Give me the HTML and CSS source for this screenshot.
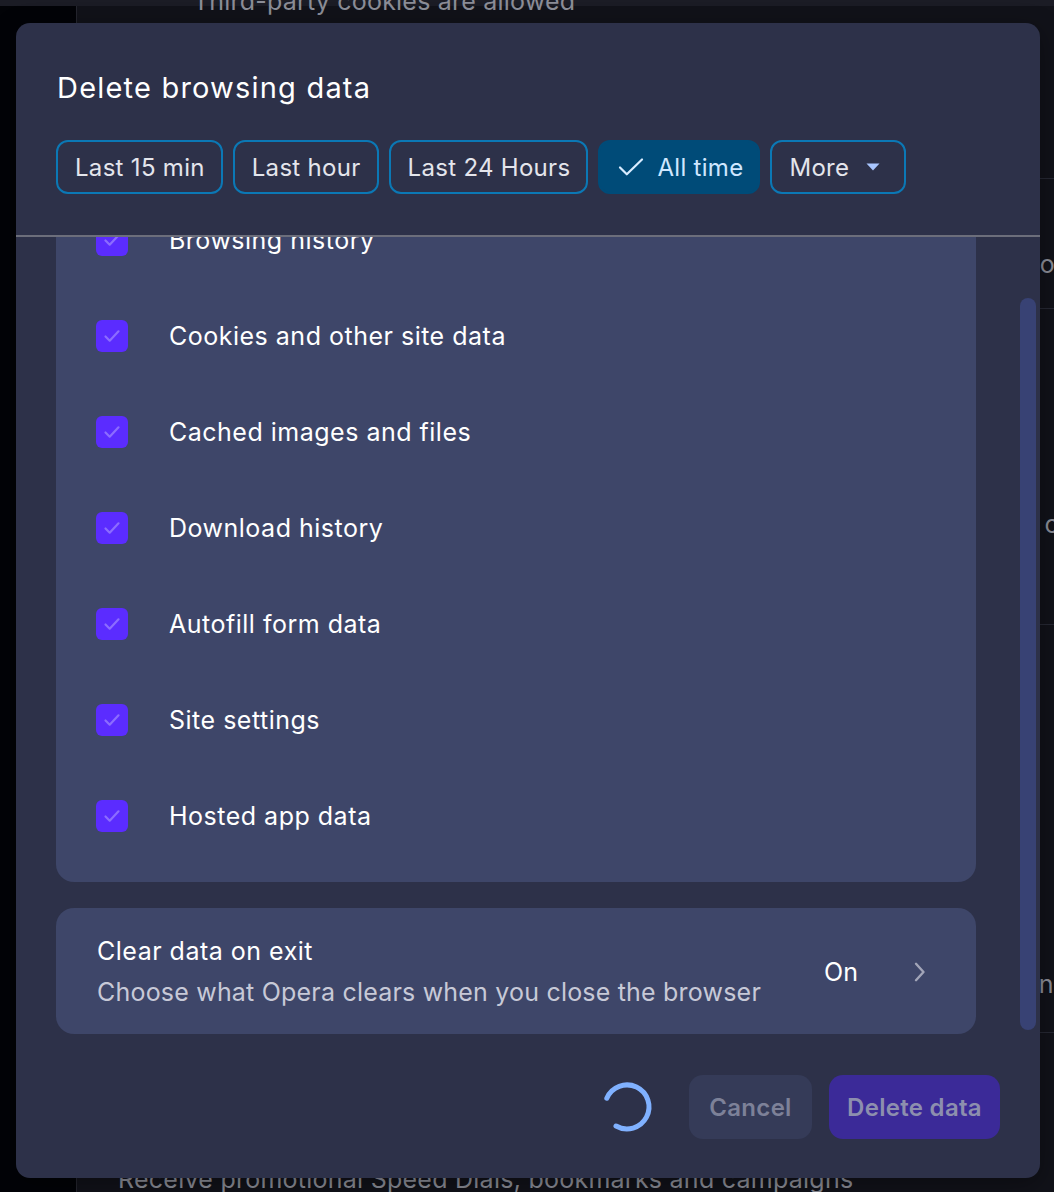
FILE: index.html
```html
<!DOCTYPE html>
<html lang="en">
<head>
<meta charset="utf-8">
<title>Delete browsing data</title>
<link rel="stylesheet" href="styles.css">
</head>
<body>
<div class="page">
  <aside class="sidebar"></aside>
  <main class="settings">
    <div class="bg-row bg-row-top"><span class="bg-text bg-third">Third-party cookies are allowed</span></div>
    <div class="bg-row bg-row-a"><span class="bg-edge">o</span></div>
    <div class="bg-row bg-row-b"><span class="bg-edge">c</span></div>
    <div class="bg-row bg-row-c"><span class="bg-edge bg-edge-na">na</span></div>
    <div class="bg-row bg-row-bottom"><span class="bg-text">Receive promotional Speed Dials, bookmarks and campaigns</span></div>
  </main>
</div>

<div class="dialog" role="dialog" aria-label="Delete browsing data">
  <div class="dialog-head">
    <h1 class="dialog-title">Delete browsing data</h1>
    <div class="chips">
      <button class="chip">Last 15 min</button>
      <button class="chip">Last hour</button>
      <button class="chip">Last 24 Hours</button>
      <button class="chip chip-selected">
        <svg class="chip-check" width="26" height="24" viewBox="0 0 26 24"><path d="M2 12.5l6.8 6.8L24 4.5" fill="none" stroke="currentColor" stroke-width="2.2" stroke-linecap="round" stroke-linejoin="round"/></svg>
        All time
      </button>
      <button class="chip chip-more">More
        <svg class="caret" width="14" height="8" viewBox="0 0 14 8"><path d="M0.5 0.5h13L7 7.5z" fill="currentColor"/></svg>
      </button>
    </div>
  </div>
  <div class="divider"></div>
  <div class="scroll">
    <div class="scroll-content">
      <div class="card list-card">
        <label class="item"><span class="box"><svg width="20" height="20" viewBox="0 0 20 20"><path d="M3.5 10.5l4.2 4.2 8.8-9.4" fill="none" stroke="currentColor" stroke-width="2.2" stroke-linecap="round" stroke-linejoin="round"/></svg></span><span class="item-label">Browsing history</span></label>
        <label class="item"><span class="box"><svg width="20" height="20" viewBox="0 0 20 20"><path d="M3.5 10.5l4.2 4.2 8.8-9.4" fill="none" stroke="currentColor" stroke-width="2.2" stroke-linecap="round" stroke-linejoin="round"/></svg></span><span class="item-label">Cookies and other site data</span></label>
        <label class="item"><span class="box"><svg width="20" height="20" viewBox="0 0 20 20"><path d="M3.5 10.5l4.2 4.2 8.8-9.4" fill="none" stroke="currentColor" stroke-width="2.2" stroke-linecap="round" stroke-linejoin="round"/></svg></span><span class="item-label">Cached images and files</span></label>
        <label class="item"><span class="box"><svg width="20" height="20" viewBox="0 0 20 20"><path d="M3.5 10.5l4.2 4.2 8.8-9.4" fill="none" stroke="currentColor" stroke-width="2.2" stroke-linecap="round" stroke-linejoin="round"/></svg></span><span class="item-label">Download history</span></label>
        <label class="item"><span class="box"><svg width="20" height="20" viewBox="0 0 20 20"><path d="M3.5 10.5l4.2 4.2 8.8-9.4" fill="none" stroke="currentColor" stroke-width="2.2" stroke-linecap="round" stroke-linejoin="round"/></svg></span><span class="item-label">Autofill form data</span></label>
        <label class="item"><span class="box"><svg width="20" height="20" viewBox="0 0 20 20"><path d="M3.5 10.5l4.2 4.2 8.8-9.4" fill="none" stroke="currentColor" stroke-width="2.2" stroke-linecap="round" stroke-linejoin="round"/></svg></span><span class="item-label">Site settings</span></label>
        <label class="item"><span class="box"><svg width="20" height="20" viewBox="0 0 20 20"><path d="M3.5 10.5l4.2 4.2 8.8-9.4" fill="none" stroke="currentColor" stroke-width="2.2" stroke-linecap="round" stroke-linejoin="round"/></svg></span><span class="item-label">Hosted app data</span></label>
      </div>
      <div class="card exit-card">
        <div class="exit-text">
          <div class="exit-title">Clear data on exit</div>
          <div class="exit-sub">Choose what Opera clears when you close the browser</div>
        </div>
        <span class="exit-state">On</span>
        <svg class="chevron" width="16" height="20" viewBox="0 0 16 20"><path d="M4 1.8l7.5 8.2L4 18.2" fill="none" stroke="currentColor" stroke-width="2.4" stroke-linecap="round" stroke-linejoin="round"/></svg>
      </div>
    </div>
    <div class="scrollbar"></div>
  </div>
  <div class="dialog-foot">
    <svg class="spinner" width="56" height="56" viewBox="0 0 56 56"><path d="M7.8 19.2A22 22 0 1 1 17 47" fill="none" stroke="currentColor" stroke-width="5" stroke-linecap="round"/></svg>
    <button class="btn btn-cancel">Cancel</button>
    <button class="btn btn-delete">Delete data</button>
  </div>
</div>
</body>
</html>
```

FILE: styles.css
```css
* { box-sizing: border-box; }

html, body {
  margin: 0;
  padding: 0;
  width: 1054px;
  height: 1192px;
  overflow: hidden;
  background: #111219;
  font-family: Inter, "Noto Sans", "Liberation Sans", sans-serif;
}

.page {
  display: flex;
  height: 1192px;
  border-top: 6px solid #1b1c25;
}

.sidebar {
  width: 77px;
  flex: none;
  background: #020307;
  border-right: 1px solid #24252e;
}

.settings {
  flex: 1;
  display: flex;
  flex-direction: column;
  color: #8b8d97;
  font-size: 25px;
  letter-spacing: 0.2px;
  line-height: 30px;
}

.bg-row {
  border-bottom: 1px solid #262833;
  display: flex;
  justify-content: space-between;
  align-items: flex-end;
}

.bg-row-top { height: 173px; align-items: flex-start; }
.bg-third { margin-left: 116px; margin-top: -20px; }
.bg-row-a { height: 130px; }
.bg-row-a .bg-edge { margin-bottom: 29px; }
.bg-row-b { height: 316px; }
.bg-row-b .bg-edge { margin-bottom: 85px; margin-right: -5px; }
.bg-row-c { height: 408px; }
.bg-row-c .bg-edge { margin-bottom: 33px; margin-right: -14px; }
.bg-row-bottom { flex: 1; border-bottom: none; }
.bg-row-bottom .bg-text { margin-left: 41px; margin-bottom: -2px; letter-spacing: 0.25px; }
.bg-edge { margin-left: auto; margin-right: -1px; }

.dialog {
  position: absolute;
  left: 16px;
  top: 23px;
  width: 1024px;
  height: 1155px;
  background: #2d3149;
  border-radius: 14px;
  overflow: hidden;
  display: flex;
  flex-direction: column;
  box-shadow: 0 6px 24px rgba(0, 0, 0, 0.35);
}

.dialog-head {
  padding: 47px 40px 0 41px;
  height: 212px;
}

.dialog-title {
  margin: 0;
  font-size: 29px;
  line-height: 36px;
  font-weight: 400;
  color: #ffffff;
  letter-spacing: 1.2px;
}

.chips {
  display: flex;
  gap: 10px;
  margin-top: 34px;
  margin-left: -1px;
}

.chip {
  height: 54px;
  padding: 0 16px 0 17px;
  border: 2px solid #0b78b5;
  border-radius: 12px;
  background: transparent;
  color: #e4e5ec;
  font-family: inherit;
  font-size: 24px;
  letter-spacing: 0.3px;
  display: flex;
  align-items: center;
  gap: 13px;
}

.chip-selected {
  background: #004b78;
  border-color: #004b78;
  color: #cfe7ff;
  padding: 0 15px 0 18px;
}

.chip-check { color: #d8ecff; }

.chip-more { gap: 17px; padding: 0 24px 0 17px; }
.caret { color: #a9c6ff; }

.divider {
  height: 2px;
  background: #6c6e7b;
}

.scroll {
  position: relative;
  height: 813px;
  overflow: hidden;
  padding: 0 64px 0 40px;
}

.scroll-content {
  margin-top: -63px;
  display: flex;
  flex-direction: column;
  gap: 26px;
}

.card {
  background: #3e4669;
  border-radius: 18px;
}

.list-card {
  padding: 18px 40px;
  display: flex;
  flex-direction: column;
}

.item {
  height: 96px;
  display: flex;
  align-items: center;
  gap: 41px;
}

.box {
  width: 32px;
  height: 32px;
  border-radius: 6px;
  background: #5b2cff;
  color: #8c6cff;
  display: flex;
  align-items: center;
  justify-content: center;
  flex: none;
}

.item-label {
  font-size: 25px;
  color: #ffffff;
  letter-spacing: 0.5px;
}

.exit-card {
  height: 126px;
  padding: 0 48px 0 41px;
  display: flex;
  align-items: center;
}

.exit-text {
  flex: 1;
  display: flex;
  flex-direction: column;
  gap: 11px;
}

.exit-title {
  font-size: 25px;
  line-height: 30px;
  color: #ffffff;
  letter-spacing: 0.5px;
}

.exit-sub {
  font-size: 25px;
  line-height: 30px;
  color: #c7c9d7;
  letter-spacing: 0.2px;
}

.exit-state {
  font-size: 25px;
  color: #ffffff;
  margin-right: 54px;
  margin-top: 2px;
}

.chevron { color: #a2a5b8; margin-top: 1px; }

.scrollbar {
  position: absolute;
  left: 1004px;
  top: 61px;
  width: 16px;
  height: 732px;
  border-radius: 8px;
  background: #384274;
}

.dialog-foot {
  flex: 1;
  display: flex;
  justify-content: flex-end;
  align-items: flex-start;
  padding: 25px 40px 0 0;
  gap: 17px;
}

.spinner {
  color: #80b1ff;
  margin-top: 4px;
}

.btn {
  height: 64px;
  border: none;
  border-radius: 14px;
  font-family: inherit;
  font-size: 24px;
  font-weight: 600;
  padding: 0;
  letter-spacing: 0.3px;
}

.btn-cancel {
  background: #353b58;
  color: #7d8198;
  width: 123px;
  margin-left: 17px;
}

.btn-delete {
  background: #3b2a98;
  color: #8d8fae;
  width: 171px;
}
```
